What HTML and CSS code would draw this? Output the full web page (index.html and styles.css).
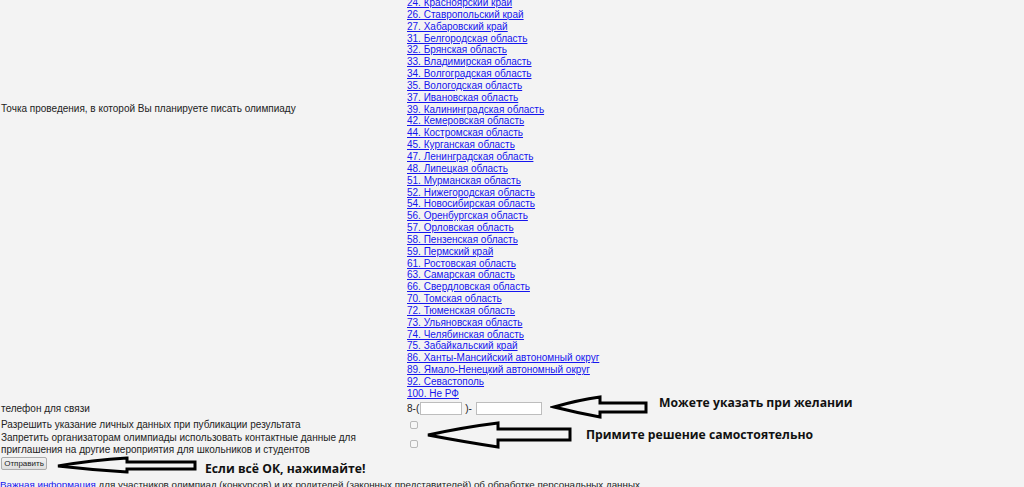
FILE: index.html
```html
<!DOCTYPE html>
<html lang="ru">
<head>
<meta charset="utf-8">
<title>Регистрация</title>
<link rel="stylesheet" href="styles.css">
</head>
<body>
<div class="page">
  <div class="form">
    <div class="label label-place">Точка проведения, в которой Вы планируете писать олимпиаду</div>
    <div class="value">
      <ul class="regions">
        <li><a href="#">24. Красноярский край</a></li>
        <li><a href="#">26. Ставропольский край</a></li>
        <li><a href="#">27. Хабаровский край</a></li>
        <li><a href="#">31. Белгородская область</a></li>
        <li><a href="#">32. Брянская область</a></li>
        <li><a href="#">33. Владимирская область</a></li>
        <li><a href="#">34. Волгоградская область</a></li>
        <li><a href="#">35. Вологодская область</a></li>
        <li><a href="#">37. Ивановская область</a></li>
        <li><a href="#">39. Калининградская область</a></li>
        <li><a href="#">42. Кемеровская область</a></li>
        <li><a href="#">44. Костромская область</a></li>
        <li><a href="#">45. Курганская область</a></li>
        <li><a href="#">47. Ленинградская область</a></li>
        <li><a href="#">48. Липецкая область</a></li>
        <li><a href="#">51. Мурманская область</a></li>
        <li><a href="#">52. Нижегородская область</a></li>
        <li><a href="#">54. Новосибирская область</a></li>
        <li><a href="#">56. Оренбургская область</a></li>
        <li><a href="#">57. Орловская область</a></li>
        <li><a href="#">58. Пензенская область</a></li>
        <li><a href="#">59. Пермский край</a></li>
        <li><a href="#">61. Ростовская область</a></li>
        <li><a href="#">63. Самарская область</a></li>
        <li><a href="#">66. Свердловская область</a></li>
        <li><a href="#">70. Томская область</a></li>
        <li><a href="#">72. Тюменская область</a></li>
        <li><a href="#">73. Ульяновская область</a></li>
        <li><a href="#">74. Челябинская область</a></li>
        <li><a href="#">75. Забайкальский край</a></li>
        <li><a href="#">86. Ханты-Мансийский автономный округ</a></li>
        <li><a href="#">89. Ямало-Ненецкий автономный округ</a></li>
        <li><a href="#">92. Севастополь</a></li>
        <li><a href="#">100. Не РФ</a></li>
      </ul>
    </div>

    <div class="label row-phone">телефон для связи</div>
    <div class="value row-phone phone">
      <span>8-(</span><input class="inp inp-code" type="text"><span>)-</span><input class="inp inp-num" type="text">
    </div>

    <div class="label row-check">Разрешить указание личных данных при публикации результата</div>
    <div class="value row-check"><input class="chk" type="checkbox"></div>

    <div class="label row-check2">Запретить организаторам олимпиады использовать контактные данные для приглашения на другие мероприятия для школьников и студентов</div>
    <div class="value row-check2"><input class="chk" type="checkbox"></div>

    <div class="submit-row"><button class="btn" type="button">Отправить</button></div>
  </div>

  <p class="note"><a href="#">Важная информация</a> для участников олимпиад (конкурсов) и их родителей (законных представителей) об обработке персональных данных</p>

  <svg class="arrow arrow-1" width="100" height="28" viewBox="550 393 100 28">
    <path d="M554,407 Q578,400 600,397 L600,403 L646,403 L646,412 L600,412 L600,417 Q578,413 554,407 Z"/>
  </svg>
  <svg class="arrow arrow-2" width="152" height="32" viewBox="424 419 152 32">
    <path d="M428,435 Q465,427 498,423 L498,429 L570,429 L570,440 L498,440 L498,447 Q465,442 428,435 Z"/>
  </svg>
  <svg class="arrow arrow-3" width="144" height="20" viewBox="54 455 144 20">
    <path d="M58,466 Q93,460 127,458 L127,462 L195,462 L195,469 L127,469 L127,472 Q93,470 58,466 Z"/>
  </svg>

  <div class="hint hint-1">Можете указать при желании</div>
  <div class="hint hint-2">Примите решение самостоятельно</div>
  <div class="hint hint-3">Если всё ОК, нажимайте!</div>
</div>
</body>
</html>
```

FILE: styles.css
```css
html, body {
  margin: 0;
  padding: 0;
  background: #f3f3f3;
}

body {
  font-family: "Liberation Sans", Arial, sans-serif;
  font-size: 10px;
  color: #222;
  overflow: hidden;
}

.page {
  position: relative;
  width: 1024px;
  height: 487px;
  overflow: hidden;
}

a {
  color: #1515ee;
  text-decoration: underline;
}

.form {
  display: grid;
  grid-template-columns: 406px 1fr;
  margin-top: -3px;
}

.label {
  padding-left: 1px;
  line-height: 12px;
}

.label-place {
  padding-top: 106px;
}

.value {
  padding-left: 1px;
}

.regions {
  list-style: none;
  margin: 0;
  padding: 0;
}

.regions li {
  line-height: 11.85px;
  height: 11.85px;
  white-space: nowrap;
}

.row-phone {
  display: flex;
  align-items: center;
  height: 16px;
  margin-top: 1px;
}

.phone span {
  line-height: 12px;
}

.inp {
  box-sizing: border-box;
  height: 13px;
  border: 1px solid #bdbdbd;
  background: #fff;
  padding: 0;
  margin: 0;
}

.inp-code {
  width: 42px;
  margin: 0 3px 0 1px;
}

.inp-num {
  width: 66px;
  margin-left: 4px;
}

.row-check {
  display: flex;
  align-items: center;
  height: 14px;
  margin-top: 1px;
}

.row-check2 {
  display: flex;
  align-items: center;
  min-height: 24px;
  margin-top: 0;
}

.chk {
  appearance: none;
  -webkit-appearance: none;
  box-sizing: border-box;
  width: 8px;
  height: 8px;
  margin: 0 0 0 3px;
  border: 1px solid #b8b8b8;
  border-radius: 2px;
  background: #f6f6f6;
}

.submit-row {
  grid-column: 1 / -1;
  padding: 1px 0 0 1px;
}

.btn {
  box-sizing: border-box;
  height: 13px;
  width: 46px;
  padding: 0;
  font-family: "Liberation Sans", Arial, sans-serif;
  font-size: 8px;
  line-height: 11px;
  color: #222;
  border: 1px solid #acacac;
  border-radius: 2px;
  background: linear-gradient(#f2f2f2, #dedede);
}

.note {
  margin: 9px 0 0 0;
  font-size: 9.8px;
  line-height: 12px;
  white-space: nowrap;
}

.arrow {
  position: absolute;
}

.arrow path {
  fill: #f3f3f3;
  stroke: #000;
  stroke-width: 3;
  stroke-linejoin: miter;
}

.arrow-1 { left: 550px; top: 393px; }
.arrow-2 { left: 424px; top: 419px; }
.arrow-3 { left: 54px; top: 455px; }

.hint {
  position: absolute;
  font-family: "Open Sans", "Noto Sans", sans-serif;
  font-weight: 700;
  font-size: 12.2px;
  line-height: 16px;
  color: #111;
  white-space: nowrap;
}

.hint-1 { left: 659px; top: 395px; }
.hint-2 { left: 586px; top: 427px; }
.hint-3 { left: 205px; top: 461px; }
```
